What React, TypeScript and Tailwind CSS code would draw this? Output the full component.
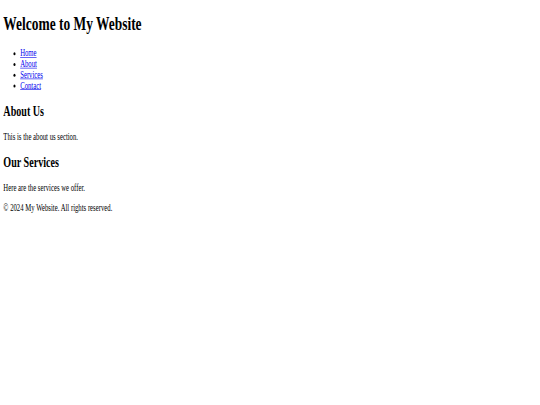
export default function App() {
    return (
        <div className="w-[540px] h-[405px] bg-white overflow-hidden">
            {/* original page rendered full size, then squeezed like the screenshot */}
            <div className="flow-root w-[1286px] h-[675px] origin-top-left scale-x-[0.42] scale-y-[0.6] px-2 text-black text-[16px] leading-[normal] [font-family:'Liberation_Serif','Times_New_Roman',serif]">
                <header>
                    <h1 className="text-[32px] font-bold my-[21.44px] leading-[normal]">Welcome to My Website</h1>
                    <nav>
                        <ul className="list-disc pl-10 my-4">
                            <li><a href="#home" className="text-[#0000ee] underline">Home</a></li>
                            <li><a href="#about" className="text-[#0000ee] underline">About</a></li>
                            <li><a href="#services" className="text-[#0000ee] underline">Services</a></li>
                            <li><a href="#contact" className="text-[#0000ee] underline">Contact</a></li>
                        </ul>
                    </nav>
                </header>
                <section>
                    <h2 className="text-[24px] font-bold my-[19.92px] leading-[normal]">About Us</h2>
                    <p className="my-4">This is the about us section.</p>
                </section>
                <section>
                    <h2 className="text-[24px] font-bold my-[19.92px] leading-[normal]">Our Services</h2>
                    <p className="my-4">Here are the services we offer.</p>
                </section>
                <footer>
                    <p className="my-4">&copy; 2024 My Website. All rights reserved.</p>
                </footer>
            </div>
        </div>
    );
}
